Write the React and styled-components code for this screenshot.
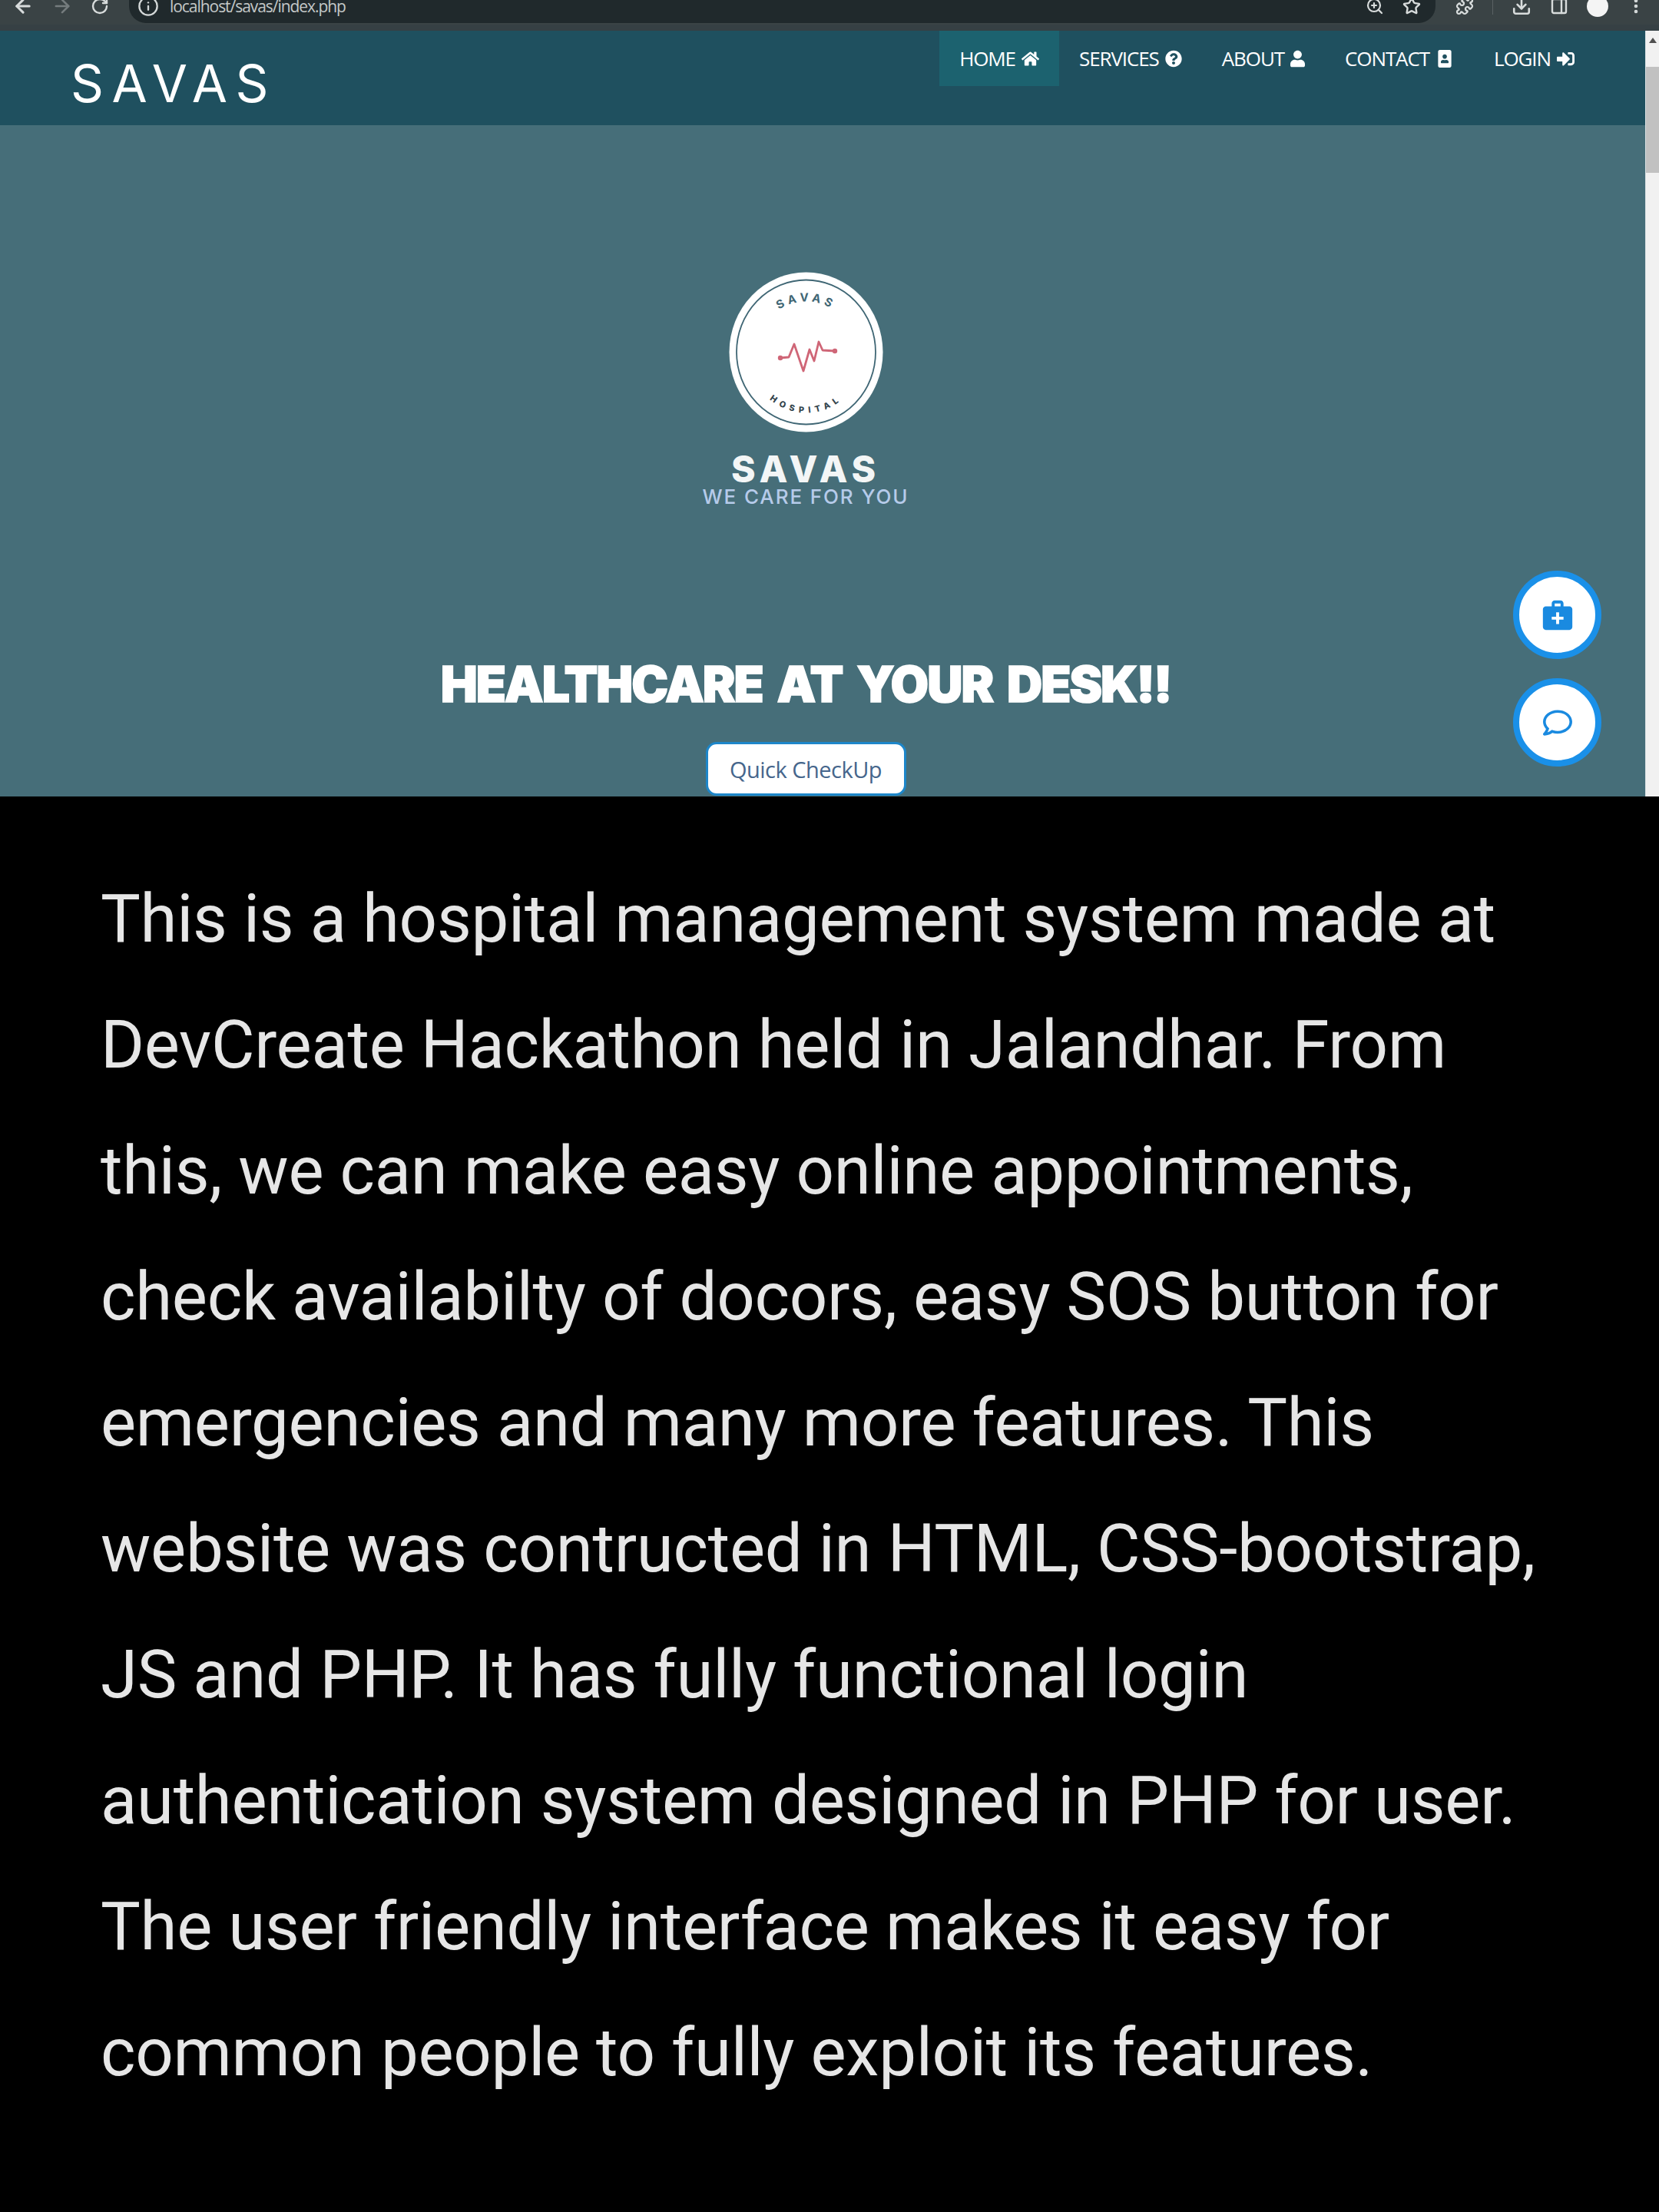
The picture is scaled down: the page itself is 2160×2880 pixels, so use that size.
import React from "react";
import styled, { createGlobalStyle } from "styled-components";
import { FaHome, FaQuestionCircle, FaUser, FaPortrait, FaSignInAlt, FaRegComment } from "react-icons/fa";
import { MdMedicalServices } from "react-icons/md";
import { ArrowLeft, ArrowRight, RotateCw, Info, ZoomIn, Star, Puzzle, Download, PanelRight, MoreVertical } from "lucide-react";

const Global = createGlobalStyle`
  html, body { margin: 0; padding: 0; background: #000; }
  * { box-sizing: border-box; }
`;
const Page = styled.div`width: 2160px; height: 2880px; background: #000; overflow: hidden;`;
const Toolbar = styled.header`
  height: 40px; display: flex; align-items: flex-start; background: #3a4345; overflow: hidden; color: #d8dcdc;
  border-bottom: 8px solid #364044;
`;
const ToolGroup = styled.div`display: flex; align-items: center; height: 16px; gap: ${p => p.$gap || 0}px; padding: ${p => p.$pad || "0"};`;
const UrlPill = styled.div`
  width: 1701px; height: 30px; margin-left: 26px; padding: 0 0 14px 11px; background: #20292c; border-radius: 0 0 22px 22px;
  display: flex; align-items: center; justify-content: space-between; flex: none;
`;
const UrlLeft = styled.div`display: flex; align-items: center; gap: 14px; color: #d4d8d8;`;
const Url = styled.span`font: 21px/16px "Open Sans", sans-serif; letter-spacing: -1.05px; color: #c4c8c8;`;
const Divider = styled.i`width: 1px; height: 22px; background: #5a6264; display: block;`;
const Avatar = styled.i`width: 28px; height: 28px; border-radius: 50%; background: #f4f4f4; display: block;`;

const Body = styled.div`display: flex; height: 997px;`;
const Site = styled.div`flex: 1; min-width: 0; position: relative; display: flex; flex-direction: column; background: #466e79;`;
const Nav = styled.nav`
  height: 123px; background: #1f505f; display: flex; justify-content: space-between; align-items: flex-start; padding: 0 66px 0 92px;
`;
const Brand = styled.div`
  font: 400 67px/1 "Inter", sans-serif; letter-spacing: 10.5px; color: #fff; padding-top: 35px;
`;
const Menu = styled.ul`list-style: none; margin: 0; padding: 0; display: flex;`;
const MenuItem = styled.li`
  height: 72px; padding: 0 26px; display: flex; align-items: center; gap: 8px; color: #fff;
  font: 400 26px/1 "Open Sans", sans-serif; letter-spacing: -1.1px;
  background: ${p => (p.$active ? "#1c626f" : "transparent")};
  svg { width: ${p => p.$icon || 23}px; height: 23px; flex: none; }
`;
const Hero = styled.section`
  flex: 1; display: flex; flex-direction: column; align-items: center; padding: 191px 44px 0 0; overflow: hidden;
`;
const Logo = styled.svg`width: 201px; height: 209px; display: block;`;
const HeroName = styled.div`
  font: 800 48px/42px "Inter", sans-serif; letter-spacing: 6px; color: #f3f6f6; margin-top: 27px;
`;
const HeroTag = styled.div`
  font: 500 26px/26px "Inter", sans-serif; letter-spacing: 1.9px; color: #b6cbea; margin-top: 2px;
`;
const HeroTitle = styled.h1`
  margin: 199px 0 0; font: 900 64px/64px "Inter", sans-serif; letter-spacing: -2px; word-spacing: 8px; color: #fff; white-space: nowrap;
  -webkit-text-stroke: 1.5px #fff;
`;
const CheckUp = styled.button`
  margin-top: 43px; width: 261px; height: 70px; flex: none; background: #fff; border: 3px solid #1d86c9; border-radius: 14px;
  font: 400 29px/1 "Open Sans", sans-serif; letter-spacing: -0.5px; color: #46668c; padding: 0;
`;
const Fab = styled.button`
  position: absolute; left: 1970px; top: ${p => p.$top}px; width: 115px; height: 115px; border-radius: 50%;
  background: #fff; border: 8px solid #1a90e8; color: #1a8ae0; display: flex; align-items: center; justify-content: center; padding: 0;
  svg { width: ${p => p.$icon}px; height: ${p => p.$icon}px; }
`;
const Scrollbar = styled.aside`
  width: 18px; flex: none; background: #f1f1f1; border-left: 1px solid #d8e0e2; display: flex; flex-direction: column; align-items: center;
`;
const ScrollArrow = styled.i`
  width: 0; height: 0; display: block; margin: 9px 0 31px; border-left: 5px solid transparent; border-right: 5px solid transparent; border-bottom: 7px solid #505050;
`;
const ScrollThumb = styled.i`width: 100%; height: 138px; background: #c1c1c1; display: block;`;
const Description = styled.section`padding: 77px 0 0 131px;`;
const Paragraph = styled.p`
  margin: 0; width: 1890px; font: 400 87px/164px "Roboto", sans-serif; letter-spacing: -0.3px; color: #e6e6e6;
`;

const TEXT = "This is a hospital management system made at DevCreate Hackathon held in Jalandhar. From this, we can make easy online appointments, check availabilty of docors, easy SOS button for emergencies and many more features. This website was contructed in HTML, CSS-bootstrap, JS and PHP. It has fully functional login authentication system designed in PHP for user. The user friendly interface makes it easy for common people to fully exploit its features.";

const MENU = [
  { label: "HOME", Icon: FaHome, active: true, icon: 23 },
  { label: "SERVICES", Icon: FaQuestionCircle, icon: 22 },
  { label: "ABOUT", Icon: FaUser, icon: 19 },
  { label: "CONTACT", Icon: FaPortrait, icon: 24 },
  { label: "LOGIN", Icon: FaSignInAlt, icon: 23 },
];

function HospitalLogo() {
  return (
    <Logo viewBox="0 0 201 209" aria-label="Savas Hospital logo">
      <defs>
        <path id="arcTop" d="M 35 104.5 A 65.5 66 0 0 1 166 104.5" />
        <path id="arcBottom" d="M 25.5 104.5 A 75 79 0 0 0 175.5 104.5" />
      </defs>
      <ellipse cx="100.5" cy="104.5" rx="100" ry="104" fill="#fff" />
      <ellipse cx="100.5" cy="104.5" rx="90.5" ry="94" fill="none" stroke="#3f6674" strokeWidth="1.8" />
      <text fontFamily="Inter, sans-serif" fontSize="15" fontWeight="700" fill="#3f6674" letterSpacing="5" textAnchor="middle">
        <textPath href="#arcTop" startOffset="50%">SAVAS</textPath>
      </text>
      <text fontFamily="Inter, sans-serif" fontSize="11" fontWeight="800" fill="#33444c" letterSpacing="6" textAnchor="middle">
        <textPath href="#arcBottom" startOffset="50%">HOSPITAL</textPath>
      </text>
      <path d="M67 112 L78 111 L85 94 L97 129 L105 101 L111 116 L117 91 L122 102 L138 103" fill="none" stroke="#cf6677" strokeWidth="2.8" strokeLinejoin="round" />
      <circle cx="67" cy="112" r="3.2" fill="#cf6677" />
      <circle cx="138" cy="103" r="3.2" fill="#cf6677" />
    </Logo>
  );
}

export default function App() {
  return (
    <Page>
      <Global />
      <Toolbar>
        <ToolGroup $gap={23} $pad="0 0 0 16px">
          <ArrowLeft size={28} strokeWidth={2.6} />
          <ArrowRight size={28} strokeWidth={2.2} color="#757c7e" />
          <RotateCw size={24} strokeWidth={2.4} />
        </ToolGroup>
        <UrlPill>
          <UrlLeft>
            <Info size={28} strokeWidth={2} />
            <Url>localhost/savas/index.php</Url>
          </UrlLeft>
          <ToolGroup $gap={24} $pad="0 19px 0 0">
            <ZoomIn size={24} strokeWidth={2.2} />
            <Star size={24} strokeWidth={2.4} />
          </ToolGroup>
        </UrlPill>
        <ToolGroup $gap={24} $pad="0 0 0 26px">
          <Puzzle size={24} strokeWidth={2.2} />
          <Divider />
          <Download size={26} strokeWidth={2.4} />
          <PanelRight size={24} strokeWidth={2.4} />
          <Avatar />
          <MoreVertical size={24} strokeWidth={2.6} />
        </ToolGroup>
      </Toolbar>
      <Body>
        <Site>
          <Nav>
            <Brand>SAVAS</Brand>
            <Menu>
              {MENU.map(({ label, Icon, active, icon }) => (
                <MenuItem key={label} $active={active} $icon={icon}>
                  {label}
                  <Icon />
                </MenuItem>
              ))}
            </Menu>
          </Nav>
          <Hero>
            <HospitalLogo />
            <HeroName>SAVAS</HeroName>
            <HeroTag>WE CARE FOR YOU</HeroTag>
            <HeroTitle>HEALTHCARE AT YOUR DESK!!</HeroTitle>
            <CheckUp>Quick CheckUp</CheckUp>
          </Hero>
          <Fab $top={703} $icon={46} aria-label="Medical"><MdMedicalServices /></Fab>
          <Fab $top={843} $icon={38} aria-label="Chat"><FaRegComment /></Fab>
        </Site>
        <Scrollbar>
          <ScrollArrow />
          <ScrollThumb />
        </Scrollbar>
      </Body>
      <Description>
        <Paragraph>{TEXT}</Paragraph>
      </Description>
    </Page>
  );
}
